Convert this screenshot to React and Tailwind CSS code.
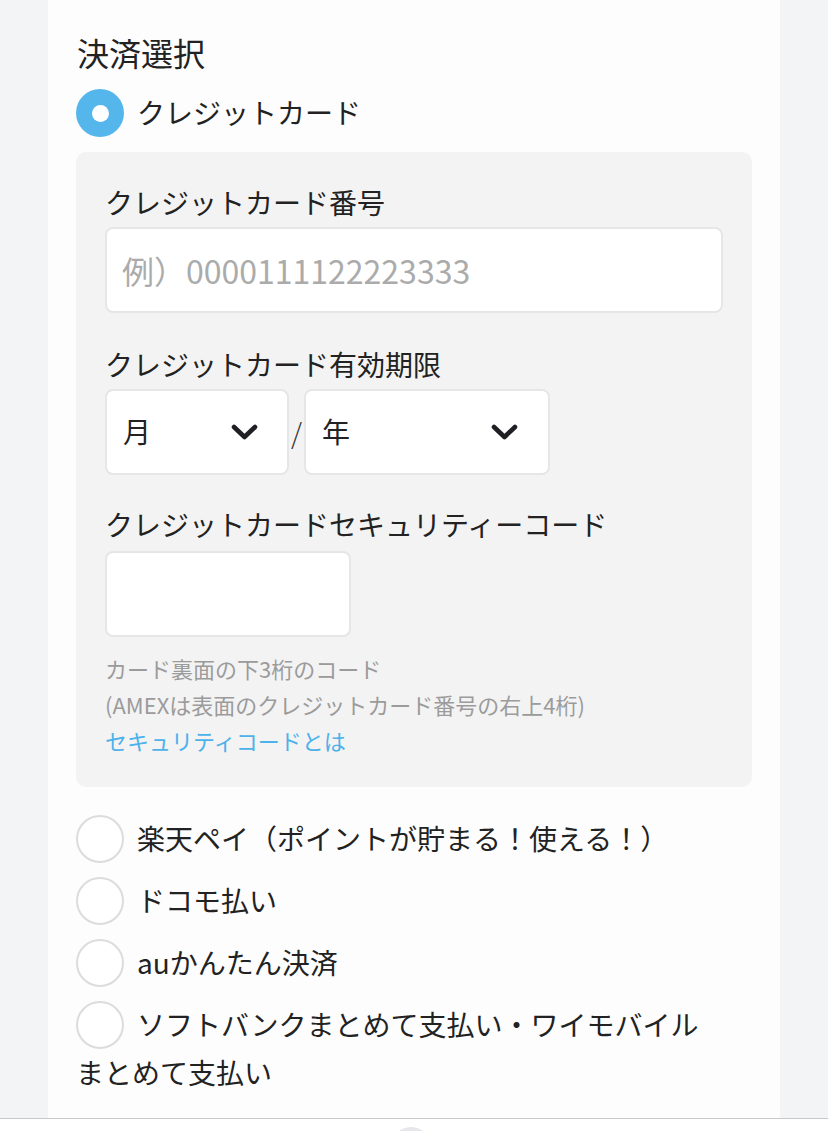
import React from "react";

function Chevron() {
  return (
    <svg width="27" height="16" viewBox="0 0 27 16" fill="none">
      <path d="M3 3 L13.5 13 L24 3" stroke="#1f1f24" strokeWidth="4.6" strokeLinecap="round" strokeLinejoin="round" />
    </svg>
  );
}

function Radio({ checked }) {
  if (checked) {
    return (
      <span className="inline-flex w-[48px] h-[48px] shrink-0 rounded-full bg-[#55b6ec] items-center justify-center align-top">
        <span className="w-[17px] h-[17px] rounded-full bg-white" />
      </span>
    );
  }
  return (
    <span className="inline-block w-[48px] h-[48px] shrink-0 rounded-full bg-white border-2 border-[#dcdcdc] align-top" />
  );
}

export default function App() {
  const options = ["楽天ペイ（ポイントが貯まる！使える！）", "ドコモ払い", "auかんたん決済"];
  return (
    <div className="w-[828px] h-[1131px] overflow-hidden bg-[#f3f4f6] flex flex-col font-['Noto_Sans_CJK_JP',sans-serif] text-[#222]">
      <div className="mx-[48px] h-[1118px] shrink-0 bg-[#fdfdfd] px-[28px] pt-[34px]">
        <h2 className="text-[32px] leading-[36px] pl-[1px]">決済選択</h2>
        <div className="mt-[19px] flex items-center h-[48px]">
          <Radio checked />
          <span className="ml-[13px] text-[28px] leading-[40px] pb-[2px]">クレジットカード</span>
        </div>

        <div className="mt-[15px] rounded-[10px] bg-[#f3f3f3] px-[29px] pt-[32px] pb-[29px]">
          <div className="text-[28px] leading-[36px]">クレジットカード番号</div>
          <input
            className="mt-[7px] block w-full h-[86px] rounded-[8px] border-2 border-[#e6e6e6] bg-white px-[15px] text-[32px] placeholder:text-[#ababab] outline-none"
            placeholder="例）0000111122223333"
          />

          <div className="mt-[33px] text-[28px] leading-[36px]">クレジットカード有効期限</div>
          <div className="mt-[7px] flex items-center">
            <div className="w-[184px] h-[86px] rounded-[8px] border-2 border-[#e6e6e6] bg-white flex items-center justify-between pl-[16px] pr-[29px]">
              <span className="text-[28px] leading-[40px] pb-[2px]">月</span>
              <Chevron />
            </div>
            <span className="w-[15px] text-center text-[28px] font-light text-[#333]">/</span>
            <div className="w-[246px] h-[86px] rounded-[8px] border-2 border-[#e6e6e6] bg-white flex items-center justify-between pl-[16px] pr-[30px]">
              <span className="text-[28px] leading-[40px] pb-[2px]">年</span>
              <Chevron />
            </div>
          </div>

          <div className="mt-[31px] text-[28px] leading-[36px]">クレジットカードセキュリティーコード</div>
          <div className="mt-[9px] w-[246px] h-[86px] rounded-[8px] border-2 border-[#e6e6e6] bg-white" />

          <div className="mt-[13px] text-[22px] leading-[36px] text-[#9b9b9b]">
            <div>カード裏面の下3桁のコード</div>
            <div>(AMEXは表面のクレジットカード番号の右上4桁)</div>
            <div className="text-[#4db1ea]">セキュリティコードとは</div>
          </div>
        </div>

        <div className="mt-[28px] flex flex-col gap-[14px]">
          {options.map((o) => (
            <div key={o} className="flex items-center h-[48px]">
              <Radio />
              <span className="ml-[13px] text-[28px] leading-[40px] pb-[2px]">{o}</span>
            </div>
          ))}
          <div className="text-[28px] leading-[47px]">
            <Radio />
            <span className="ml-[13px]">ソフトバンクまとめて支払い・ワイモバイル</span>
            <br />
            まとめて支払い
          </div>
        </div>
      </div>
      <div className="h-[1px] shrink-0 bg-[#c9c9c9]" />
      <div className="flex-1 bg-white flex justify-center overflow-hidden">
        <div className="mt-[8px] ml-[-6px] w-[40px] h-[40px] shrink-0 rounded-full bg-[#e6e7ec]" />
      </div>
    </div>
  );
}
